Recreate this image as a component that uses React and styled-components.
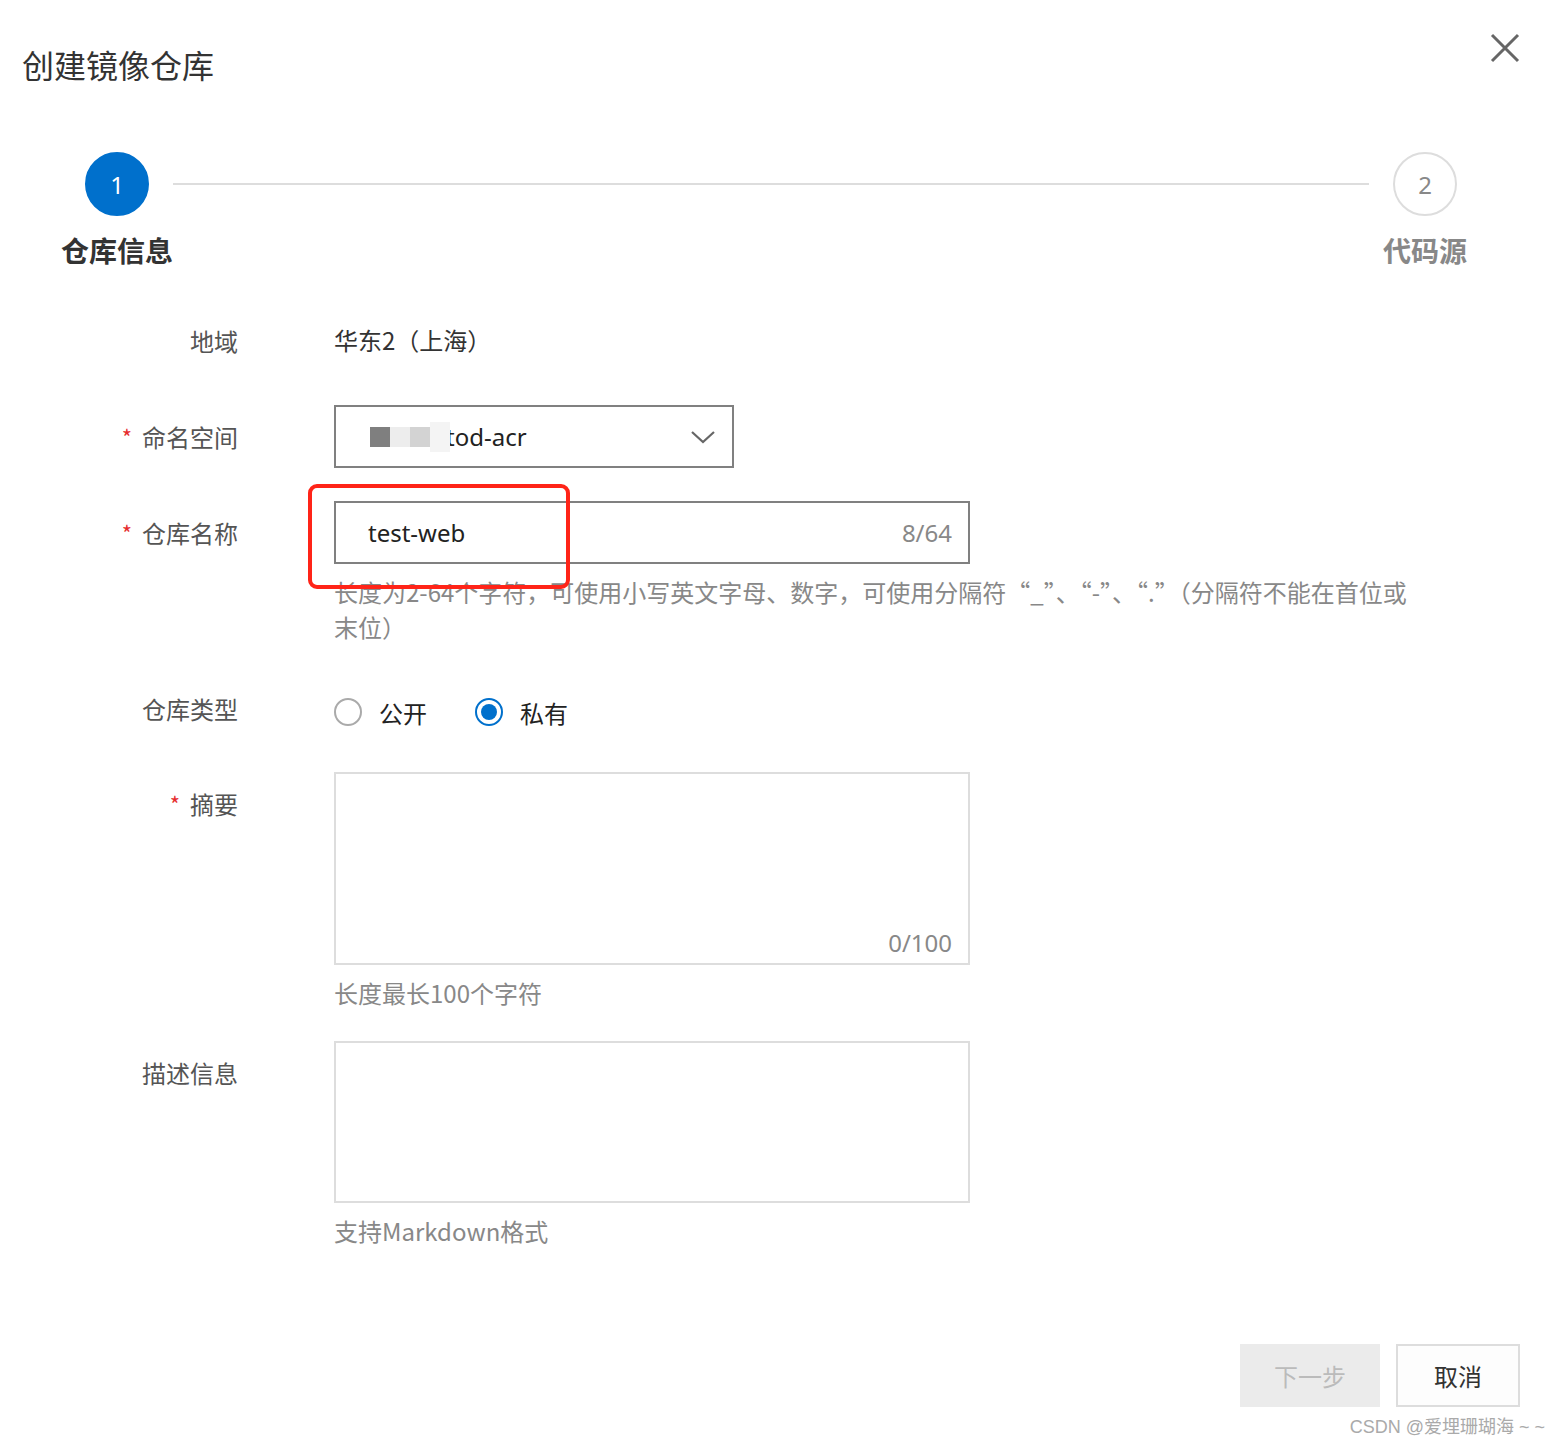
import React from 'react';
import styled, { createGlobalStyle } from 'styled-components';

const GlobalStyle = createGlobalStyle`
    body {
        margin: 0;
        background: #fff;
        font-family: 'Noto Sans CJK SC', 'Noto Sans', sans-serif;
        color: #333;
    }
`;

const Dialog = styled.div`
    width: 1560px;
    min-height: 1448px;
    box-sizing: border-box;
    padding: 44px 40px 0 22px;
`;

const Header = styled.div`
    display: flex;
    justify-content: space-between;
    align-items: flex-start;
`;

const Title = styled.h1`
    margin: 0;
    font-size: 32px;
    font-weight: 400;
    line-height: 40px;
    color: #333;
`;

const CloseButton = styled.button`
    border: none;
    background: none;
    padding: 0;
    margin-top: -11px;
    width: 30px;
    height: 30px;
    cursor: pointer;
`;

// Steps
const Steps = styled.div`
    display: flex;
    align-items: flex-start;
    margin: 68px 63px 0 63px;
`;

const Step = styled.div`
    width: 64px;
    display: flex;
    flex-direction: column;
    align-items: center;
`;

const StepCircle = styled.div`
    width: 64px;
    height: 64px;
    box-sizing: border-box;
    border-radius: 50%;
    display: flex;
    align-items: center;
    justify-content: center;
    font-size: 24px;
    font-family: 'Noto Sans', sans-serif;
    background: ${props => (props.active ? '#0070cc' : '#fff')};
    border: 2px solid ${props => (props.active ? '#0070cc' : '#ddd')};
    color: ${props => (props.active ? '#fff' : '#888')};
`;

const StepLabel = styled.div`
    margin-top: 16px;
    white-space: nowrap;
    font-size: 28px;
    line-height: 36px;
    font-weight: 700;
    color: ${props => (props.active ? '#333' : '#888')};
`;

const Connector = styled.div`
    flex: 1;
    height: 2px;
    background: #ddd;
    margin: 31px 24px 0 24px;
`;

// Form
const Form = styled.div`
    display: flex;
    flex-direction: column;
    margin-top: ${props => props.top || 0}px;
`;

const FormRow = styled.div`
    display: grid;
    grid-template-columns: 216px 1fr;
    column-gap: 96px;
    margin-top: ${props => props.gap || 0}px;
`;

const Label = styled.div`
    display: flex;
    justify-content: flex-end;
    align-items: center;
    font-size: 24px;
    color: #555;
    height: ${props => props.h || 32}px;
    white-space: nowrap;
`;

const Required = styled.span`
    color: #e62e2e;
    font-size: 22px;
    margin-right: 10px;
    margin-top: -2px;
`;

const Control = styled.div`
    display: flex;
    flex-direction: column;
    align-items: flex-start;
`;

const PlainValue = styled.div`
    font-size: 24px;
    line-height: 32px;
    color: #333;
`;

const SelectBox = styled.div`
    width: 400px;
    height: 63px;
    box-sizing: border-box;
    border: 2px solid #808080;
    display: flex;
    align-items: center;
    justify-content: space-between;
    padding: 0 16px 0 34px;
    font-size: 24px;
    color: #333;
`;

const Masked = styled.div`
    display: flex;
    align-items: center;
`;

// redaction blocks sit over the start of the namespace name
const MaskBlock = styled.span`
    display: inline-block;
    width: 20px;
    height: ${props => props.h || 20}px;
    background: ${props => props.color};
    position: relative;
    z-index: 1;
`;

const MaskText = styled.span`
    font-family: 'Noto Sans', sans-serif;
    font-size: 24px;
    margin-left: -4px;
    color: #222;
`;

const TextInput = styled.div`
    position: relative;
    width: 636px;
    height: 63px;
    box-sizing: border-box;
    border: 2px solid #808080;
    display: flex;
    align-items: center;
    justify-content: space-between;
    padding: 0 16px 0 32px;
    font-size: 24px;
    font-family: 'Noto Sans', sans-serif;
    color: #222;
`;

const Counter = styled.span`
    color: #888;
    font-size: 24px;
    font-family: 'Noto Sans', sans-serif;
`;

const Highlight = styled.div`
    position: absolute;
    left: -28px;
    top: -19px;
    width: 262px;
    height: 105px;
    box-sizing: border-box;
    border: 4px solid #ff2418;
    border-radius: 9px;
    pointer-events: none;
`;

const Help = styled.div`
    margin-top: ${props => props.top || 10}px;
    max-width: 1080px;
    font-size: 24px;
    line-height: 35px;
    color: #888;
`;

const RadioGroup = styled.div`
    display: flex;
    align-items: center;
    height: 32px;
    gap: 48px;
    margin-top: 4px;
`;

const RadioItem = styled.label`
    display: flex;
    align-items: center;
    gap: 17px;
    font-size: 24px;
    color: #222;
`;

const RadioCircle = styled.span`
    width: 28px;
    height: 28px;
    box-sizing: border-box;
    border-radius: 50%;
    border: 2px solid ${props => (props.checked ? '#0070cc' : '#aaa')};
    display: flex;
    align-items: center;
    justify-content: center;

    &::after {
        content: '';
        display: ${props => (props.checked ? 'block' : 'none')};
        width: 16px;
        height: 16px;
        border-radius: 50%;
        background: #0070cc;
    }
`;

const TextArea = styled.div`
    width: 636px;
    height: ${props => props.h}px;
    box-sizing: border-box;
    border: 2px solid #ddd;
    display: flex;
    align-items: flex-end;
    justify-content: flex-end;
    padding: 0 16px 4px 0;
`;

const Footer = styled.div`
    display: flex;
    justify-content: flex-end;
    gap: 16px;
    margin-top: 96px;
`;

const Button = styled.button`
    height: 63px;
    width: ${props => props.w}px;
    box-sizing: border-box;
    font-family: 'Noto Sans CJK SC', sans-serif;
    font-size: 24px;
    border: 2px solid ${props => (props.disabled ? '#ebebeb' : '#ddd')};
    background: ${props => (props.disabled ? '#ebebeb' : '#fdfdfd')};
    color: ${props => (props.disabled ? '#bbb' : '#333')};
`;

const Watermark = styled.div`
    text-align: right;
    margin: 8px -25px 0 0;
    font-family: 'Liberation Sans', 'Noto Sans CJK SC', sans-serif;
    font-size: 18px;
    line-height: 24px;
    color: #aaa;
`;

const Close = () => (
    <svg width="30" height="30" viewBox="0 0 30 30">
        <path d="M2 2 L28 28 M28 2 L2 28" stroke="#666" strokeWidth="3" fill="none" />
    </svg>
);

const Chevron = () => (
    <svg width="26" height="16" viewBox="0 0 26 16">
        <path d="M2 3 L13 13 L24 3" stroke="#666" strokeWidth="2.2" fill="none" />
    </svg>
);

export default function App() {
    return (
        <Dialog>
            <GlobalStyle />
            <Header>
                <Title>创建镜像仓库</Title>
                <CloseButton><Close /></CloseButton>
            </Header>

            <Steps>
                <Step>
                    <StepCircle active>1</StepCircle>
                    <StepLabel active>仓库信息</StepLabel>
                </Step>
                <Connector />
                <Step>
                    <StepCircle>2</StepCircle>
                    <StepLabel>代码源</StepLabel>
                </Step>
            </Steps>

            <Form top={56}>
                <FormRow>
                    <Label>地域</Label>
                    <Control><PlainValue>华东2（上海）</PlainValue></Control>
                </FormRow>

                <FormRow gap={49}>
                    <Label h={63}><Required>*</Required>命名空间</Label>
                    <Control>
                        <SelectBox>
                            <Masked>
                                <MaskBlock color="#7f7f7f" />
                                <MaskBlock color="#ededed" />
                                <MaskBlock color="#d3d3d3" />
                                <MaskBlock color="#f4f4f4" h={30} />
                                <MaskText>tod-acr</MaskText>
                            </Masked>
                            <Chevron />
                        </SelectBox>
                    </Control>
                </FormRow>

                <FormRow gap={33}>
                    <Label h={63}><Required>*</Required>仓库名称</Label>
                    <Control>
                        <TextInput>
                            <span>test-web</span>
                            <Counter>8/64</Counter>
                            <Highlight />
                        </TextInput>
                        <Help>长度为2-64个字符，可使用小写英文字母、数字，可使用分隔符“_”、“-”、“.”（分隔符不能在首位或末位）</Help>
                    </Control>
                </FormRow>

                <FormRow gap={48}>
                    <Label>仓库类型</Label>
                    <Control>
                        <RadioGroup>
                            <RadioItem><RadioCircle />公开</RadioItem>
                            <RadioItem><RadioCircle checked />私有</RadioItem>
                        </RadioGroup>
                    </Control>
                </FormRow>

                <FormRow gap={44}>
                    <Label h={63}><Required>*</Required>摘要</Label>
                    <Control>
                        <TextArea h={193}><Counter>0/100</Counter></TextArea>
                        <Help>长度最长100个字符</Help>
                    </Control>
                </FormRow>

                <FormRow gap={31}>
                    <Label h={63}>描述信息</Label>
                    <Control>
                        <TextArea h={162} />
                        <Help>支持Markdown格式</Help>
                    </Control>
                </FormRow>
            </Form>

            <Footer>
                <Button w={140} disabled>下一步</Button>
                <Button w={124}>取消</Button>
            </Footer>
            <Watermark>CSDN @爱埋珊瑚海 ~ ~</Watermark>
        </Dialog>
    );
}
